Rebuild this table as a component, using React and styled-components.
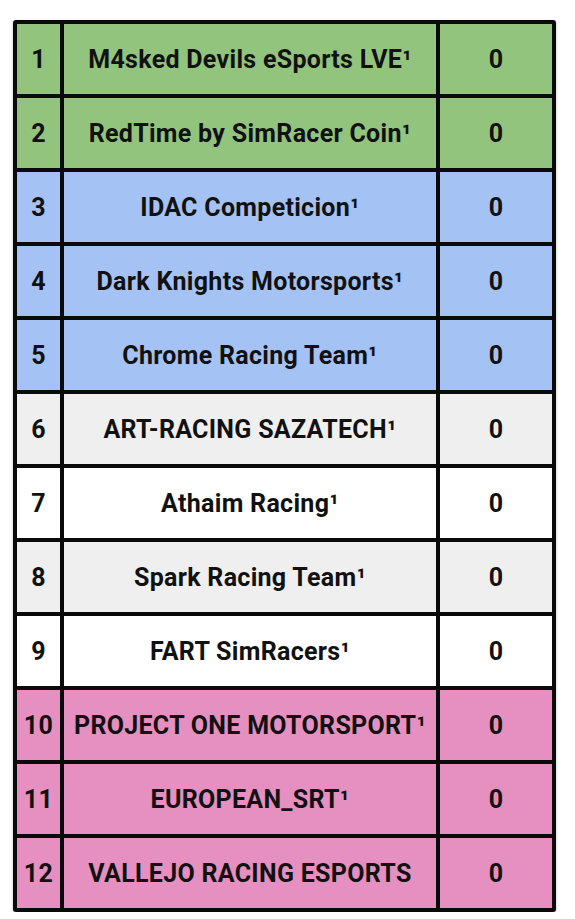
import React from 'react';
import styled, { createGlobalStyle } from 'styled-components';

const GlobalStyle = createGlobalStyle`
    html, body {
        margin: 0;
        padding: 0;
        background: #ffffff;
    }
    body {
        font-family: Roboto, "Noto Sans", "Liberation Sans", sans-serif;
    }
`;

const COLOURS = {
    green: '#93c47d',
    blue: '#a4c2f4',
    grey: '#efefef',
    white: '#ffffff',
    pink: '#e590c0'
};

const Page = styled.div`
    padding: 20px 0 0 13px;
`;

const Table = styled.div`
    display: grid;
    grid-template-columns: 43px 372px 112px;
    grid-auto-rows: 70px;
    gap: 4px;
    padding: 4px;
    width: max-content;
    background: #0a0a0a;
    border-radius: 3px;
    box-shadow: 0 1px 3px rgba(0, 0, 0, 0.25);
`;

const Cell = styled.div`
    display: flex;
    align-items: center;
    justify-content: center;
    background: ${props => COLOURS[props.colour]};
    color: #111111;
    font-weight: 700;
    font-size: 25px;
    letter-spacing: 0.3px;
    white-space: nowrap;
    overflow: hidden;
`;

const teams = [
    { name: 'M4sked Devils eSports LVE¹', colour: 'green' },
    { name: 'RedTime by SimRacer Coin¹', colour: 'green' },
    { name: 'IDAC Competicion¹', colour: 'blue' },
    { name: 'Dark Knights Motorsports¹', colour: 'blue' },
    { name: 'Chrome Racing Team¹', colour: 'blue' },
    { name: 'ART-RACING SAZATECH¹', colour: 'grey' },
    { name: 'Athaim Racing¹', colour: 'white' },
    { name: 'Spark Racing Team¹', colour: 'grey' },
    { name: 'FART SimRacers¹', colour: 'white' },
    { name: 'PROJECT ONE MOTORSPORT¹', colour: 'pink' },
    { name: 'EUROPEAN_SRT¹', colour: 'pink' },
    { name: 'VALLEJO RACING ESPORTS', colour: 'pink' }
];

const App = () => (
    <Page>
        <GlobalStyle />
        <Table>
            {teams.map((team, i) => (
                <React.Fragment key={team.name}>
                    <Cell colour={team.colour}>{i + 1}</Cell>
                    <Cell colour={team.colour}>{team.name}</Cell>
                    <Cell colour={team.colour}>0</Cell>
                </React.Fragment>
            ))}
        </Table>
    </Page>
);

export default App;
